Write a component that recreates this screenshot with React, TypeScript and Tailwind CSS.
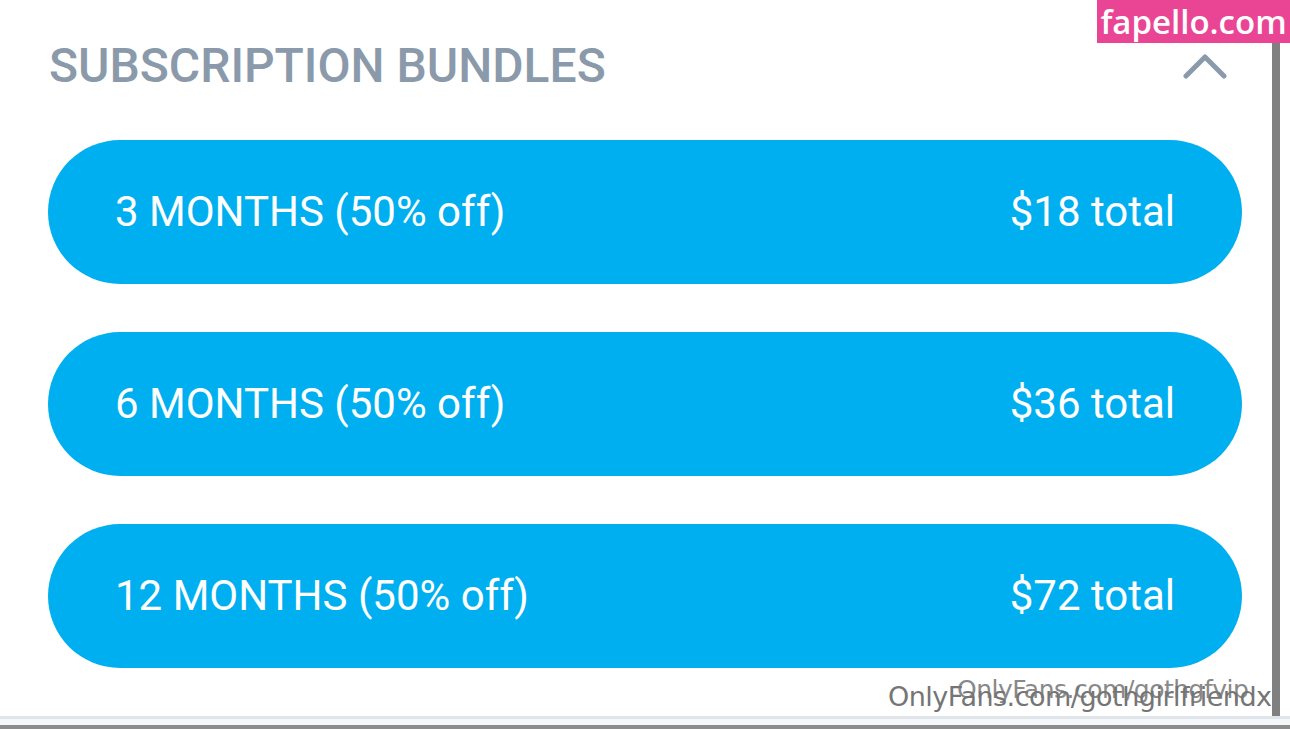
import { type FC } from "react";

const BUNDLES: [string, string][] = [
  ["3 MONTHS (50% off)", "$18 total"],
  ["6 MONTHS (50% off)", "$36 total"],
  ["12 MONTHS (50% off)", "$72 total"],
];

const Bundle: FC<{ label: string; price: string }> = ({ label, price }) => (
  <button
    type="button"
    className="flex h-[144px] w-full items-center justify-between rounded-full bg-[#00aff0] px-[67px] text-[42px] leading-none text-white"
  >
    <span>{label}</span>
    <span>{price}</span>
  </button>
);

export default function App() {
  return (
    <div
      className="relative flex h-[729px] w-[1290px] flex-col overflow-hidden bg-white"
      style={{ fontFamily: "Roboto, 'Liberation Sans', sans-serif" }}
    >
      <div className="flex flex-1">
        <div className="flex flex-1 flex-col pl-[48px] pr-[30px]">
          <div className="flex h-[132px] items-center justify-between pr-[15px]">
            <h2 className="pl-[1px] text-[48px] font-medium leading-none text-[#8a9aab]">SUBSCRIPTION BUNDLES</h2>
            <svg width="44" height="26" viewBox="0 0 44 26" fill="none">
              <path d="M3 23 L22 4 L41 23" stroke="#8a9aab" strokeWidth="5" strokeLinecap="round" strokeLinejoin="round" />
            </svg>
          </div>
          <div className="flex flex-col gap-[48px] pt-[8px]">
            {BUNDLES.map(([label, price]) => (
              <Bundle key={label} label={label} price={price} />
            ))}
          </div>
        </div>
        <div className="relative z-10 w-[8px] bg-[#808080]" />
        <div className="relative z-10 w-[10px] bg-white" />
      </div>

      <div className="relative z-10 h-[3px] bg-[#dfe5ea]" />
      <div className="relative z-10 h-[6px] bg-[#f4f6f8]" />
      <div className="relative z-10 h-[4px] bg-[#8c8c8c]" />

      {/* watermarks */}
      <div className="absolute right-0 top-0 z-20 flex h-[43px] w-[193px] items-center justify-center bg-[#ea4595]">
        <span className="text-[33px] font-semibold leading-none text-white" style={{ fontFamily: "'Open Sans', sans-serif" }}>
          fapello.com
        </span>
      </div>
      <span
        className="absolute left-[888px] top-[683px] whitespace-nowrap text-[27px] leading-none text-[#757575]"
        style={{ fontFamily: "'DejaVu Sans', sans-serif", letterSpacing: "-0.5px" }}
      >
        OnlyFans.com/gothgirlfriendx
      </span>
      <span
        className="absolute left-[957px] top-[677px] whitespace-nowrap text-[25px] leading-none text-[#757575] opacity-85"
        style={{ fontFamily: "'DejaVu Sans', sans-serif", letterSpacing: "-0.5px" }}
      >
        OnlyFans.com/gothgfvip
      </span>
    </div>
  );
}
